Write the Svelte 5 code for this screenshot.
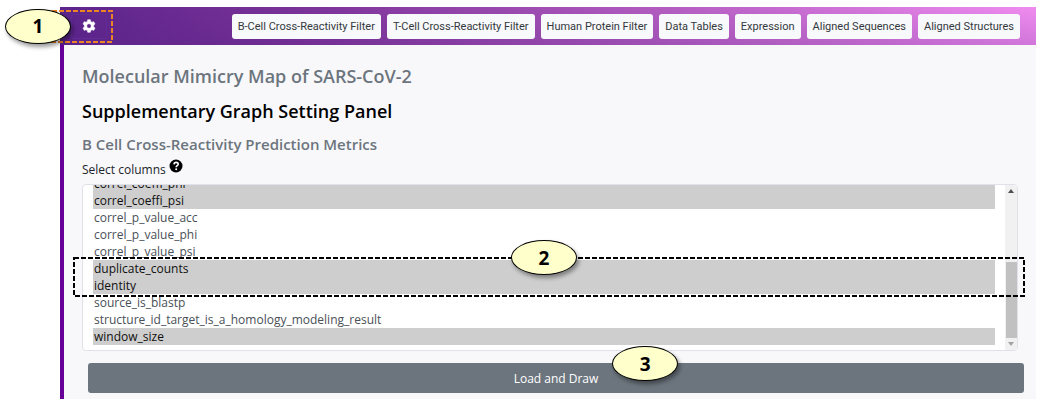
<script>
  import { onMount } from 'svelte';

  const tabs = [
    'B-Cell Cross-Reactivity Filter',
    'T-Cell Cross-Reactivity Filter',
    'Human Protein Filter',
    'Data Tables',
    'Expression',
    'Aligned Sequences',
    'Aligned Structures'
  ];

  const columns = [
    'correl_coeffi_phi',
    'correl_coeffi_psi',
    'correl_p_value_acc',
    'correl_p_value_phi',
    'correl_p_value_psi',
    'duplicate_counts',
    'identity',
    'source_is_blastp',
    'structure_id_target_is_a_homology_modeling_result',
    'window_size'
  ];

  let selected = $state([
    'correl_coeffi_phi',
    'correl_coeffi_psi',
    'duplicate_counts',
    'identity',
    'window_size'
  ]);

  let list;

  function scrollToEnd() {
    list.scrollTop = list.scrollHeight;
  }

  onMount(() => {
    // The browser reveals the first selected option after layout, so scroll once it has done so.
    requestAnimationFrame(() => requestAnimationFrame(scrollToEnd));
  });
</script>

<main class="panel">
  <header class="bar">
    <div class="settings">
      <button class="gear" type="button" aria-label="Settings">
        <svg viewBox="0 0 16 16" width="14" height="14" aria-hidden="true">
          <path
            fill="#fff"
            fill-rule="evenodd"
            d="M6.5 0.8h3l.4 2 1.5.9 2-.7 1.5 2.6-1.6 1.4v2l1.6 1.4-1.5 2.6-2-.7-1.5.9-.4 2h-3l-.4-2-1.5-.9-2 .7-1.5-2.6L2.700 9V7L1.100 5.600 2.600 3l2 .7 1.500-.9zM8 5.400a2.600 2.600 0 1 0 0 5.200 2.600 2.600 0 0 0 0-5.200z"
            stroke="#fff"
            stroke-width=".6"
            stroke-linejoin="round"
          />
        </svg>
      </button>
      <svg class="dashes orange" aria-hidden="true"><rect x="1" y="1" width="100%" height="100%" /></svg>
      <span class="mark mark-one">1</span>
    </div>
    <nav class="tabs">
      {#each tabs as tab}
        <button class="tab" type="button">{tab}</button>
      {/each}
    </nav>
  </header>

  <section class="content">
    <h1 class="muted">Molecular Mimicry Map of SARS-CoV-2</h1>
    <h2>Supplementary Graph Setting Panel</h2>
    <h3 class="muted">B Cell Cross-Reactivity Prediction Metrics</h3>
    <div class="field-label">
      <label for="columns">Select columns</label>
      <svg class="help" viewBox="0 0 14 14" width="14" height="14" aria-hidden="true">
        <circle cx="7" cy="7" r="6.500" fill="#000" />
        <path d="M5 5.400C5.100 4 6 3.400 7.100 3.400s2.100.7 2.100 1.800c0 1.500-2 1.500-2 3.100" fill="none" stroke="#fff" stroke-width="1.600" />
        <circle cx="7.200" cy="10.300" r="1" fill="#fff" />
      </svg>
    </div>

    <div class="listbox">
      <select id="columns" multiple bind:this={list} bind:value={selected}>
        {#each columns as column}
          <option value={column}>{column}</option>
        {/each}
      </select>
      <div class="track" aria-hidden="true">
        <svg viewBox="0 0 12 12" width="12" height="12"><path d="M3 8l3-4 3 4z" fill="#505050" /></svg>
        <div class="thumb"></div>
        <svg viewBox="0 0 12 12" width="12" height="12"><path d="M3 4l3 4 3-4z" fill="#a3a3a3" /></svg>
      </div>
      <div class="callout">
        <svg class="dashes" aria-hidden="true"><rect x="1" y="1" width="100%" height="100%" /></svg>
        <span class="mark mark-two">2</span>
      </div>
    </div>

    <div class="action">
      <button class="load" type="button">Load and Draw</button>
      <span class="mark mark-three">3</span>
    </div>
  </section>
</main>

<style>
  :global(body) {
    background: #fff;
  }

  .panel {
    margin: 7px 11px 10px 60px;
    background: #f8f8fb;
    font-family: 'Open Sans', 'Noto Sans', sans-serif;
    font-size: 12px;
    color: #212529;
  }

  button {
    font: inherit;
    cursor: pointer;
  }

  .bar {
    display: flex;
    align-items: center;
    justify-content: space-between;
    box-sizing: border-box;
    min-height: 38px;
    padding: 0 16px 0 11px;
    background:
      linear-gradient(to bottom, #4b1a7c00, #4b1a7c30),
      linear-gradient(to right, #5c258c, #7b3399 25%, #a955b9 55%, #f08cf0);
  }

  .settings {
    position: relative;
  }

  .gear {
    display: flex;
    align-items: center;
    justify-content: center;
    width: 36px;
    height: 25px;
    padding: 0;
    border: 1px solid #5f2d93;
    border-radius: 3px;
    background: transparent;
  }

  .tabs {
    display: flex;
    gap: 6px;
  }

  .tab {
    height: 25px;
    padding: 0 6px;
    border: 0;
    border-radius: 3px;
    background: #f8f9fa;
    color: #33383d;
    font-family: Roboto, sans-serif;
    font-size: 11px;
    white-space: nowrap;
  }

  .content {
    padding: 17px 12px 6px 18px;
    border-left: 4px solid #660099;
  }

  h1,
  h2,
  h3 {
    margin: 0;
    color: #000;
    font-weight: 600;
  }

  h1,
  h2 {
    margin-bottom: 7px;
    font-size: 18px;
    line-height: 28px;
  }

  h3 {
    font-size: 15px;
    line-height: 24px;
  }

  .muted {
    color: #6c757d;
  }

  .field-label {
    display: flex;
    gap: 3px;
    line-height: 28px;
  }

  .help {
    margin-top: 3px;
  }

  .listbox {
    position: relative;
    display: flex;
    box-sizing: border-box;
    height: 167px;
    margin-right: 6px;
    border: 1px solid #e1e1e9;
    border-radius: 4px;
    background: #fff;
  }

  select {
    flex: 1;
    min-width: 0;
    padding: 4px 10px 5px 10px;
    border: 0;
    outline: 0;
    background: transparent;
    color: #495057;
    font: inherit;
    scrollbar-width: none;
  }

  option {
    min-height: 17px;
    padding: 0 1px;
    line-height: 17px;
  }

  .track {
    display: flex;
    flex-direction: column;
    justify-content: space-between;
    align-items: center;
    width: 12px;
    background: #f1f1f1;
  }

  .thumb {
    width: 11px;
    height: 76px;
    margin-top: auto;
    background: #c1c1c1;
  }

  .callout {
    position: absolute;
    left: -10px;
    right: -8px;
    top: 72px;
    height: 40px;
    pointer-events: none;
  }

  .dashes {
    position: absolute;
    inset: 0;
    width: 100%;
    height: 100%;
  }

  .dashes rect {
    width: calc(100% - 2px);
    height: calc(100% - 2px);
    fill: none;
    stroke: #000;
    stroke-width: 2;
    stroke-dasharray: 5 2;
  }

  .orange {
    inset: -4px auto auto -20px;
    width: 62px;
    height: 33px;
    pointer-events: none;
  }

  .orange rect {
    stroke: #ec8426;
  }

  .mark {
    position: absolute;
    display: flex;
    align-items: center;
    justify-content: center;
    box-sizing: border-box;
    width: 66px;
    height: 35px;
    border: 1px solid #000;
    border-radius: 50%;
    background: #ffffcc;
    box-shadow: 2px 3px 4px #0006;
    color: #000;
    font-size: 19px;
    font-weight: 700;
    pointer-events: none;
  }

  .mark-one {
    left: -66px;
    top: -5px;
  }

  .mark-two {
    left: 46%;
    top: -17px;
  }

  .mark-three {
    left: 56%;
    top: -17px;
  }

  .action {
    position: relative;
    margin: 12px 0 0 6px;
  }

  .load {
    display: block;
    width: 100%;
    height: 30px;
    border: 0;
    border-radius: 3px;
    background: #6c757d;
    color: #fff;
  }
</style>
